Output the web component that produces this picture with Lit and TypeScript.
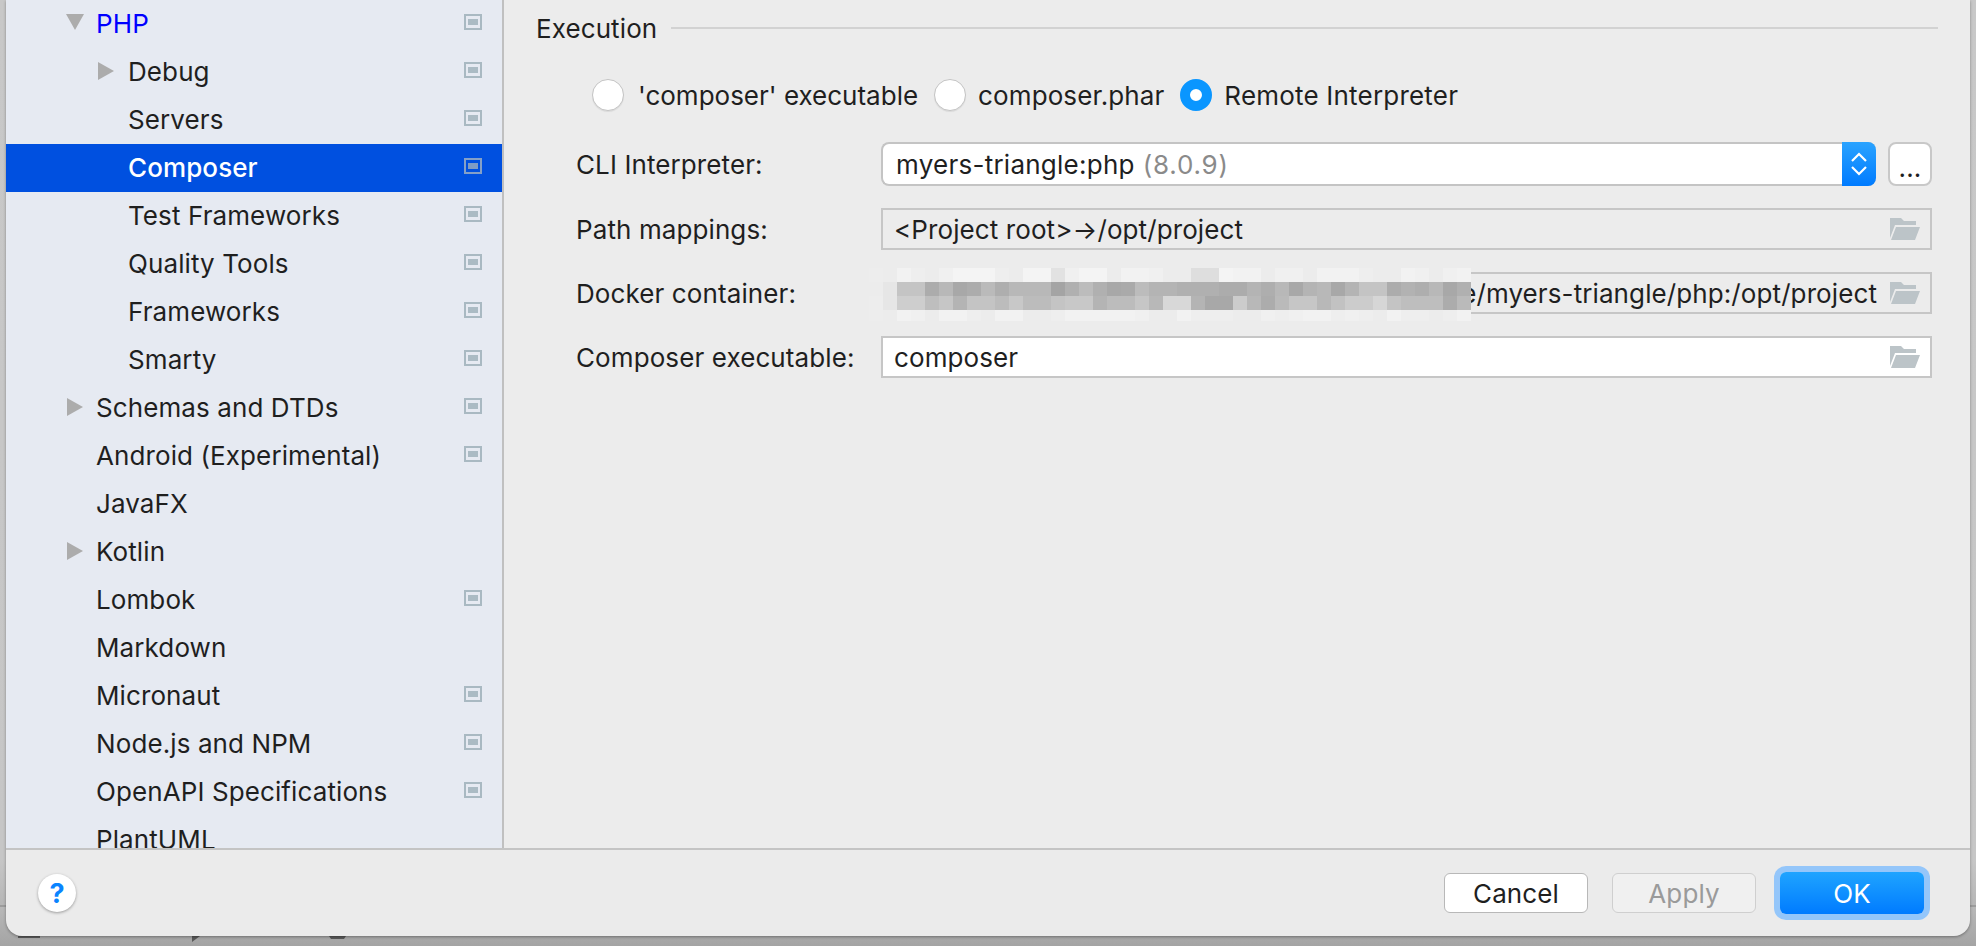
import { LitElement, html, css, svg } from 'lit';
import { customElement } from 'lit/decorators.js';

interface TreeRow {
    label: string;
    depth: number;
    arrow?: 'open' | 'closed';
    gear?: boolean;
    active?: boolean;
    link?: boolean;
}

const TREE: TreeRow[] = [
    { label: 'PHP', depth: 1, arrow: 'open', gear: true, link: true },
    { label: 'Debug', depth: 2, arrow: 'closed', gear: true },
    { label: 'Servers', depth: 2, gear: true },
    { label: 'Composer', depth: 2, gear: true, active: true },
    { label: 'Test Frameworks', depth: 2, gear: true },
    { label: 'Quality Tools', depth: 2, gear: true },
    { label: 'Frameworks', depth: 2, gear: true },
    { label: 'Smarty', depth: 2, gear: true },
    { label: 'Schemas and DTDs', depth: 1, arrow: 'closed', gear: true },
    { label: 'Android (Experimental)', depth: 1, gear: true },
    { label: 'JavaFX', depth: 1 },
    { label: 'Kotlin', depth: 1, arrow: 'closed' },
    { label: 'Lombok', depth: 1, gear: true },
    { label: 'Markdown', depth: 1 },
    { label: 'Micronaut', depth: 1, gear: true },
    { label: 'Node.js and NPM', depth: 1, gear: true },
    { label: 'OpenAPI Specifications', depth: 1, gear: true },
    { label: 'PlantUML', depth: 1 },
];

// grey levels of the pixelated block over the docker path, one string per row
const MOSAIC = [
    'ed ec f2 ee ec f0 f4 f4 f4 ee ec f4 f4 e2 f0 f4 f4 ec f2 f2 f0 ec ec de de f4 f2 f2 ec f0 f0 ec f2 f2 f2 ee ec ec f2 f0 ec f0 f2',
    'ec e6 c4 c4 ac b8 a8 ac ba ae b8 b8 b8 a4 b0 bc b0 a8 aa bc b4 b4 b0 b0 b0 ac ac b4 ae b8 a8 b4 b8 a8 b4 c4 c4 ac b2 ae b8 a8 b0',
    'ed e6 ce ce be c6 b4 c4 c4 bc c8 bc bc c4 c8 c8 b4 bc bc c6 b8 d8 d8 b4 a8 a8 cc b8 ac ba c6 c6 b8 c2 cc cc d6 c4 be be be ac ba',
    'ed ec f2 f0 ec f2 f2 ee ec f2 f2 ec ec ee f2 f2 f2 f2 f2 f0 ec ec f2 ee ee ee ec ec f0 ee f0 f2 f2 ee f0 ee ec f2 ee ee ec ee f2',
];

const gearIcon = (active: boolean) => svg`
    <svg class="gear" width="18" height="16" viewBox="0 0 18 16">
        <path fill=${active ? '#84a0c8' : '#a9b9c2'} fill-rule="evenodd" d="M0 0h18v16H0zM2 2v12h14V2z"/>
        <rect x="4" y="5" width="10" height="6" fill=${active ? '#7f9cc4' : '#abbbc4'}/>
    </svg>`;

const folderIcon = svg`
    <svg class="folder" width="30" height="22" viewBox="0 0 30 22">
        <path fill="#bcc4c8" d="M0 0h11l3 3h12v4H5L0 20zM6 9h24l-5 13H1z"/>
    </svg>`;

@customElement('app-root')
export class AppRoot extends LitElement {
    static override styles = css`
        :host {
            display: block;
            position: relative;
            width: 1976px;
            height: 946px;
            overflow: hidden;
            background: linear-gradient(#c8c8c8 0, #c6c6c6 860px, #b6b6b6 905px, #9c9c9c 905px, #9c9c9c 907px, #b8b8b8 907px, #a4a4a4 946px);
            font-family: Inter, 'Liberation Sans', sans-serif;
            font-size: 26px;
            letter-spacing: 0.1px;
            color: #1f1f1f;
        }

        .dialog {
            margin: 0 6px;
            height: 936px;
            display: flex;
            flex-direction: column;
            background: #ebebeb;
            border-radius: 0 0 16px 16px;
            overflow: hidden;
            box-shadow: 0 1px 3px rgba(0, 0, 0, 0.35);
            position: relative;
        }

        .specks {
            position: absolute;
            left: 0;
            top: 936px;
        }

        .body {
            flex: none;
            height: 848px;
            display: flex;
        }

        .tree {
            flex: none;
            width: 496px;
            background: #e6eaf2;
            border-right: 2px solid #c0c0c0;
            overflow: hidden;
        }

        .row {
            height: 48px;
            box-sizing: border-box;
            padding-bottom: 2px;
            display: flex;
            align-items: center;
            position: relative;
            white-space: nowrap;
        }

        .row.link { color: #0000ff; }
        .row.active { background: #0050e0; color: #fff; font-weight: 500; }

        .arrow {
            width: 32px;
            display: flex;
            justify-content: center;
            flex: none;
        }

        .arrow.open { padding-bottom: 2px; }

        .gear {
            position: absolute;
            left: 458px;
            top: 14px;
        }

        .main {
            flex: 1;
            background: #ececec;
            padding: 7px 32px 0 32px;
        }

        .section {
            height: 42px;
            display: flex;
            align-items: center;
            gap: 14px;
        }

        .section::after {
            content: '';
            flex: 1;
            height: 2px;
            background: #d2d2d2;
        }

        .radios {
            display: flex;
            align-items: center;
            margin: 24px 0 0 56px;
            height: 44px;
        }

        .radio {
            display: flex;
            align-items: center;
            gap: 14px;
            margin-right: 16px;
            letter-spacing: 0;
        }

        .radio + .radio {
            gap: 12px;
            letter-spacing: 0.1px;
        }

        .radio:last-child { letter-spacing: 0.2px; }

        .dot {
            width: 32px;
            height: 32px;
            box-sizing: border-box;
            border-radius: 50%;
            background: #fff;
            border: 1px solid #c4c4c4;
            box-shadow: 0 1px 1px rgba(0, 0, 0, 0.08);
        }

        .dot.on {
            border: 10px solid #0a96ff;
            box-shadow: none;
        }

        .form {
            margin: 25px 6px 0 40px;
            display: grid;
            grid-template-columns: 305px 1fr;
            row-gap: 22px;
            align-items: center;
        }

        .combo-row {
            display: flex;
            gap: 12px;
        }

        .combo {
            flex: 1;
            height: 44px;
            box-sizing: border-box;
            display: flex;
            align-items: center;
            background: #fff;
            border: 2px solid #c4c4c4;
            border-right: none;
            border-radius: 8px;
            padding-left: 13px;
            position: relative;
            letter-spacing: 0.25px;
            white-space: pre;
        }

        .combo .ver {
            color: #8a8a8a;
            margin-left: 8px;
            letter-spacing: 0.8px;
        }

        .stepper {
            position: absolute;
            top: -2px;
            right: 0;
            width: 34px;
            height: 44px;
            border-radius: 0 8px 8px 0;
            background: linear-gradient(#2aa3ff, #007bff);
            display: flex;
            align-items: center;
            justify-content: center;
        }

        .more {
            flex: none;
            width: 44px;
            height: 44px;
            box-sizing: border-box;
            background: #fff;
            border: 2px solid #c8c8c8;
            border-radius: 8px;
            display: flex;
            align-items: flex-end;
            justify-content: center;
            line-height: 32px;
        }

        .field {
            height: 42px;
            box-sizing: border-box;
            border: 2px solid #c6c6c6;
            display: flex;
            align-items: center;
            padding: 0 10px 0 11px;
            white-space: nowrap;
        }

        .field.white { background: #fff; }
        .field .value { flex: 1; }
        .field .value.end { text-align: right; padding-right: 13px; }

        .mosaic {
            position: absolute;
            left: 869px;
            top: 268px;
            width: 604px;
            height: 53px;
            overflow: hidden;
            display: grid;
            grid-template-columns: repeat(43, 14px);
            grid-auto-rows: 14px;
        }

        .footer {
            flex: 1;
            border-top: 2px solid #c4c4c4;
            display: flex;
            align-items: center;
            padding: 0 46px 0 32px;
            gap: 24px;
        }

        .help {
            width: 38px;
            height: 38px;
            box-sizing: border-box;
            border-radius: 50%;
            background: #fff;
            box-shadow: 0 1px 3px rgba(0, 0, 0, 0.35);
            color: #0a84ff;
            font-weight: 700;
            font-size: 27px;
            display: flex;
            align-items: center;
            justify-content: center;
            margin-right: auto;
        }

        .btn {
            width: 144px;
            height: 40px;
            box-sizing: border-box;
            border-radius: 6px;
            background: #fff;
            border: 1px solid #b8b8b8;
            display: flex;
            align-items: center;
            justify-content: center;
        }

        .btn.off {
            background: #f0f0f0;
            border-color: #cfcfcf;
            color: #9a9a9a;
        }

        .btn.ok {
            height: 42px;
            border: none;
            color: #fff;
            background: linear-gradient(#1fa4ff, #007bff);
            box-shadow: 0 0 0 6px #94c6fa;
        }
    `;

    private _renderRow(row: TreeRow) {
        const classes = ['row', row.active ? 'active' : '', row.link ? 'link' : ''].join(' ');
        const shift = row.depth === 1 ? 5 : 6;
        const arrow = row.arrow === 'open'
            ? svg`<svg width="18" height="16" viewBox="0 0 18 16"><path fill="#acacac" d="M0 0h18L9 16z"/></svg>`
            : row.arrow === 'closed'
                ? svg`<svg width="16" height="18" viewBox="0 0 16 18"><path fill="#acacac" d="M0 0l16 9L0 18z"/></svg>`
                : '';
        return html`
            <div class=${classes} style=${`padding-left:${row.depth * 32 + 26}px`}>
                <span class="arrow ${row.arrow === 'open' ? 'open' : ''}" style=${`margin-left:${-shift}px;margin-right:${shift}px`}>${arrow}</span>
                ${row.label}
                ${row.gear ? gearIcon(!!row.active) : ''}
            </div>
        `;
    }

    private _renderMosaic() {
        return html`
            <div class="mosaic">
                ${MOSAIC.flatMap((line) => line.split(' ')).map((g) => html`
                    <span style=${`background:#${g}${g}${g}`}></span>
                `)}
            </div>
        `;
    }

    override render() {
        return html`
            <svg class="specks" width="400" height="10" viewBox="0 0 400 10">
                <path fill="#5a5a5a" d="M18 0h22v2H18zM192 0h8l-8 6zM329 0h17l-2 3h-13z"/>
            </svg>
            <div class="dialog">
                <div class="body">
                    <div class="tree">${TREE.map((row) => this._renderRow(row))}</div>
                    <div class="main">
                        <div class="section">Execution</div>
                        <div class="radios">
                            <label class="radio"><span class="dot"></span>'composer' executable</label>
                            <label class="radio"><span class="dot"></span>composer.phar</label>
                            <label class="radio"><span class="dot on"></span>Remote Interpreter</label>
                        </div>
                        <div class="form">
                            <span>CLI Interpreter:</span>
                            <div class="combo-row">
                                <div class="combo">
                                    <span>myers-triangle:php</span><span class="ver">(8.0.9)</span>
                                    <span class="stepper">
                                        <svg width="16" height="24" viewBox="0 0 16 24" fill="none" stroke="#fff" stroke-width="2.2">
                                            <path d="M1 9l7-7 7 7M1 15l7 7 7-7"/>
                                        </svg>
                                    </span>
                                </div>
                                <div class="more">...</div>
                            </div>
                            <span>Path mappings:</span>
                            <div class="field"><span class="value">&lt;Project root&gt;→/opt/project</span>${folderIcon}</div>
                            <span>Docker container:</span>
                            <div class="field"><span class="value end">e/myers-triangle/php:/opt/project</span>${folderIcon}</div>
                            <span>Composer executable:</span>
                            <div class="field white"><span class="value">composer</span>${folderIcon}</div>
                        </div>
                    </div>
                </div>
                <div class="footer">
                    <div class="help">?</div>
                    <div class="btn">Cancel</div>
                    <div class="btn off">Apply</div>
                    <div class="btn ok">OK</div>
                </div>
            </div>
            ${this._renderMosaic()}
        `;
    }
}

declare global {
    interface HTMLElementTagNameMap {
        'app-root': AppRoot;
    }
}
